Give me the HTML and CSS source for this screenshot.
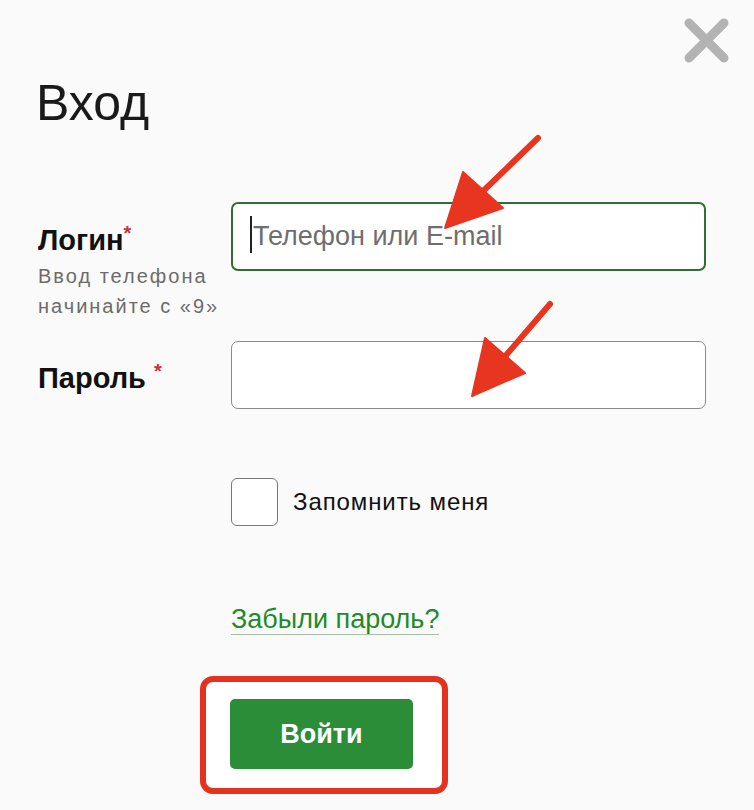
FILE: index.html
```html
<!DOCTYPE html>
<html lang="ru">
<head>
    <meta charset="UTF-8">
    <meta name="viewport" content="width=device-width, initial-scale=1.0">
    <title>Вход</title>
    <link rel="stylesheet" href="styles.css">
</head>
<body>

<div class="login-box">
    <button class="close-btn" type="button" aria-label="Закрыть">
        <svg width="50" height="50" viewBox="0 0 50 50">
            <path d="M7 7 L42 42 M42 7 L7 42" stroke="#b3b3b3" stroke-width="9" stroke-linecap="round"/>
        </svg>
    </button>

    <h1 class="title">Вход</h1>

    <!-- Login row -->
    <div class="form-row first">
        <div class="label-cell">
            <label class="field-label" for="login">Логин<span class="req">*</span></label>
            <p class="hint">Ввод телефона<br>начинайте с «9»</p>
        </div>
        <div class="input login-input">
            <span class="caret"></span>
            <input type="text" id="login" placeholder="Телефон или E-mail">
        </div>
    </div>

    <!-- Password row -->
    <div class="form-row second">
        <div class="label-cell pass-label">
            <label class="field-label" for="password">Пароль <span class="req">*</span></label>
        </div>
        <div class="input pass-input">
            <input type="password" id="password">
        </div>
    </div>

    <div class="form-row remember-row">
        <div></div>
        <label class="remember">
            <span class="checkbox"></span>
            <span>Запомнить меня</span>
        </label>
    </div>

    <div class="form-row link-row">
        <div></div>
        <div><a href="#" class="forgot">Забыли пароль?</a></div>
    </div>

    <div class="form-row submit-row">
        <div></div>
        <div>
            <div class="highlight">
                <button class="submit-btn" type="button">Войти</button>
            </div>
        </div>
    </div>

    <!-- annotation arrows -->
    <svg class="arrows" width="754" height="810" viewBox="0 0 754 810">
        <g fill="#e8351f" stroke="#e8351f">
            <line x1="538" y1="138" x2="478" y2="196" stroke-width="6" stroke-linecap="round"/>
            <polygon points="445,228 463,172 503,208" stroke-width="2" stroke-linejoin="round"/>
            <line x1="550" y1="304" x2="502" y2="360" stroke-width="6" stroke-linecap="round"/>
            <polygon points="472,396 485,338 525,373" stroke-width="2" stroke-linejoin="round"/>
        </g>
    </svg>
</div>

</body>
</html>
```

FILE: styles.css
```css
body {
    margin: 0;
    font-family: "Liberation Sans", Arial, sans-serif;
    background-color: #f8f8f8;
    color: #111;
}

.login-box {
    position: relative;
    width: 754px;
    height: 810px;
    box-sizing: border-box;
    padding: 78px 0 0 38px;
    background-color: #fafafa;
}

.close-btn {
    position: absolute;
    top: 16px;
    right: 22px;
    padding: 0;
    border: none;
    background: none;
    cursor: pointer;
}

.close-btn svg {
    display: block;
}

.title {
    margin: 0 0 0 -2px;
    font-size: 50px;
    line-height: 50px;
    font-weight: normal;
    color: #1a1a1a;
}

.form-row {
    display: grid;
    grid-template-columns: 193px 475px;
}

.form-row.first {
    margin-top: 74px;
}

.form-row.second {
    margin-top: 20px;
}

.label-cell {
    padding-top: 21px;
}

.pass-label {
    padding-top: 20px;
}

.field-label {
    display: block;
    font-size: 29px;
    line-height: 34px;
    font-weight: bold;
    color: #111;
}

.req {
    color: #c8303a;
    font-size: 20px;
    vertical-align: top;
    line-height: 20px;
}

.hint {
    margin: 4px 0 0 0;
    font-size: 20px;
    line-height: 30px;
    letter-spacing: 2px;
    color: #6b6b6b;
}

.input {
    position: relative;
    box-sizing: border-box;
    background-color: #fff;
    border-radius: 7px;
    align-self: start;
}

.input input {
    width: 100%;
    height: 100%;
    box-sizing: border-box;
    border: none;
    outline: none;
    background: transparent;
    padding: 0 0 0 20px;
    font-family: "Liberation Sans", Arial, sans-serif;
    font-size: 27px;
    color: #222;
}

.input input::placeholder {
    color: #6e6e6e;
}

.login-input {
    height: 69px;
    border: 2px solid #2f6f2f;
}

.caret {
    position: absolute;
    left: 17px;
    top: 12px;
    width: 2px;
    height: 37px;
    background-color: #222;
}

.pass-input {
    height: 68px;
    border: 1px solid #8a8a8a;
}

.remember-row {
    margin-top: 69px;
}

.remember {
    display: flex;
    align-items: center;
    gap: 15px;
    font-size: 24px;
    letter-spacing: 0.9px;
    color: #111;
    cursor: pointer;
}

.checkbox {
    width: 45px;
    height: 46px;
    border: 1px solid #777;
    border-radius: 6px;
    background-color: #fff;
}

.link-row {
    margin-top: 78px;
}

.forgot {
    display: inline-block;
    font-size: 27px;
    line-height: 30px;
    color: #1f8a2a;
    text-decoration: none;
    border-bottom: 1px solid #a6bfa6;
}

.submit-row {
    margin-top: 41px;
}

.highlight {
    display: inline-block;
    margin-left: -31px;
    padding: 17px 29px 19px 24px;
    border: 6px solid #e5321f;
    border-radius: 13px;
    background-color: #fff;
}

.submit-btn {
    display: block;
    width: 183px;
    height: 70px;
    border: none;
    border-radius: 5px;
    background-color: #2b8d38;
    color: #fff;
    font-family: "Liberation Sans", Arial, sans-serif;
    font-size: 27px;
    font-weight: bold;
    cursor: pointer;
}

.arrows {
    position: absolute;
    top: 0;
    left: 0;
    pointer-events: none;
}
```
